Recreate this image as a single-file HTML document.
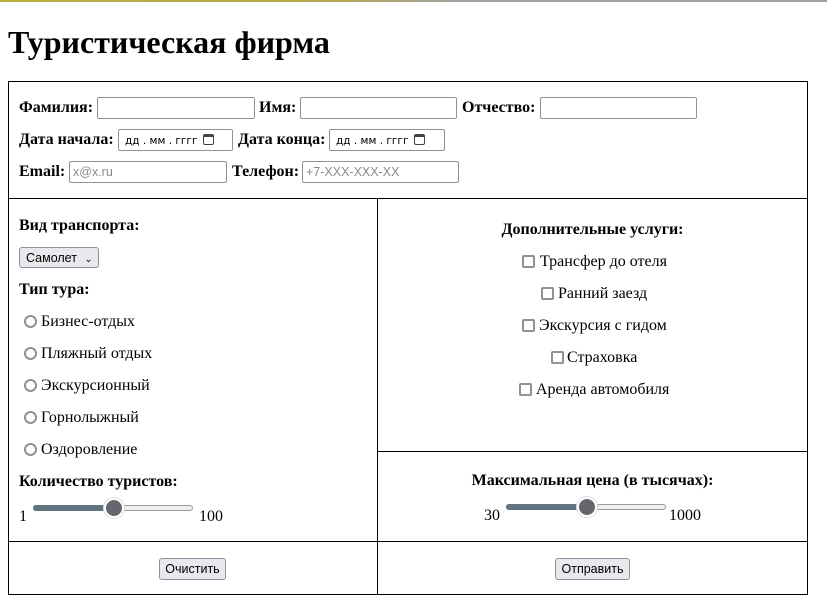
<!DOCTYPE html>
<html><head><meta charset="utf-8">
<style>
*{box-sizing:border-box;margin:0;padding:0}
body{width:827px;height:610px;background:#fff;position:relative;overflow:hidden;font-family:"Liberation Serif","Noto Serif CJK SC",serif;font-size:16px;color:#000}
.a{position:absolute;white-space:nowrap;line-height:18px}
.b{font-weight:bold}
.in{position:absolute;border:1px solid #8f8f9d;border-radius:2px;height:22px;background:#fff;font-family:"Liberation Sans",sans-serif;font-size:12.5px;color:#8a8a8a;padding:3px 3px;white-space:nowrap;line-height:15px}
.line{position:absolute;background:#000}
.rad{position:absolute;width:13px;height:13px;border:2px solid #8f8f9d;border-radius:50%}
.chk{position:absolute;width:13px;height:13px;border:2px solid #8f8f9d;border-radius:2px}
.btn{position:absolute;border:1px solid #8f8f9d;border-radius:3px;background:#e9e9ed;font-family:"Liberation Sans",sans-serif;font-size:12.5px;height:22px;text-align:center;line-height:20px}
.trk{position:absolute;height:6px;border-radius:3px;border:1px solid #9a9a9a;background:#efeff2}
.fill{position:absolute;height:6px;border-radius:3px;background:#5f7580}
.th{position:absolute;width:20px;height:20px;border-radius:50%;background:#66666e;border:2px solid #fff;box-shadow:0 0 0 1px #ddd}
.cal{display:inline-block;width:11px;height:11px;border:1.5px solid #444;border-top-width:3px;border-radius:2px;vertical-align:-1px;margin-left:2px}
</style></head><body>
<div class="a" style="left:0;top:0;width:827px;height:2px;background:linear-gradient(90deg,#b8b040 0%,#b8a850 40%,#a0a0a0 55%,#a0a0a0 100%)"></div>
<div class="a b" style="left:8px;top:22px;font-size:32px;line-height:40px">Туристическая фирма</div>

<div class="line" style="left:8px;top:81px;width:800px;height:1px"></div>
<div class="line" style="left:8px;top:594px;width:800px;height:1px"></div>
<div class="line" style="left:8px;top:81px;width:1px;height:514px"></div>
<div class="line" style="left:807px;top:81px;width:1px;height:514px"></div>
<div class="line" style="left:8px;top:198px;width:800px;height:1px"></div>
<div class="line" style="left:8px;top:541px;width:800px;height:1px"></div>
<div class="line" style="left:377px;top:198px;width:1px;height:397px"></div>
<div class="line" style="left:377px;top:451px;width:431px;height:1px"></div>

<div class="a b" style="left:19px;top:99px">Фамилия:</div>
<div class="in" style="left:97px;top:97px;width:158px"></div>
<div class="a b" style="left:259px;top:99px">Имя:</div>
<div class="in" style="left:300px;top:97px;width:157px"></div>
<div class="a b" style="left:462px;top:99px">Отчество:</div>
<div class="in" style="left:540px;top:97px;width:157px"></div>

<div class="a b" style="left:19px;top:131px">Дата начала:</div>
<div class="in" style="left:118px;top:129px;width:115px;color:#000;font-family:'DejaVu Sans','Liberation Sans',sans-serif;font-size:10.5px;padding-top:4px;padding-left:6px">дд . мм . гггг <span class="cal"></span></div>
<div class="a b" style="left:238px;top:131px">Дата конца:</div>
<div class="in" style="left:329px;top:129px;width:116px;color:#000;font-family:'DejaVu Sans','Liberation Sans',sans-serif;font-size:10.5px;padding-top:4px;padding-left:6px">дд . мм . гггг <span class="cal"></span></div>

<div class="a b" style="left:19px;top:163px">Email:</div>
<div class="in" style="left:69px;top:161px;width:158px">x@x.ru</div>
<div class="a b" style="left:232px;top:163px">Телефон:</div>
<div class="in" style="left:302px;top:161px;width:157px">+7-XXX-XXX-XX</div>

<div class="a b" style="left:19px;top:217px">Вид транспорта:</div>
<div class="btn" style="left:19px;top:247px;width:80px;height:21px;text-align:left;padding-left:6px;color:#000">Самолет <span style="font-size:10px;margin-left:4px">&#8964;</span></div>
<div class="a b" style="left:19px;top:281px">Тип тура:</div>
<div class="rad" style="left:24px;top:315px"></div><div class="a" style="left:41px;top:313px">Бизнес-отдых</div>
<div class="rad" style="left:24px;top:347px"></div><div class="a" style="left:41px;top:345px">Пляжный отдых</div>
<div class="rad" style="left:24px;top:379px"></div><div class="a" style="left:41px;top:377px">Экскурсионный</div>
<div class="rad" style="left:24px;top:411px"></div><div class="a" style="left:41px;top:409px">Горнолыжный</div>
<div class="rad" style="left:24px;top:443px"></div><div class="a" style="left:41px;top:441px">Оздоровление</div>
<div class="a b" style="left:19px;top:473px">Количество туристов:</div>
<div class="a" style="left:19px;top:508px">1</div>
<div class="trk" style="left:33px;top:505px;width:160px"></div>
<div class="fill" style="left:33px;top:505px;width:82px"></div>
<div class="th" style="left:104px;top:498px"></div>
<div class="a" style="left:199px;top:508px">100</div>

<div class="a b" style="left:378px;width:429px;text-align:center;top:221px">Дополнительные услуги:</div>
<div class="chk" style="left:522px;top:255px"></div><div class="a" style="left:540px;top:253px">Трансфер до отеля</div>
<div class="chk" style="left:541px;top:287px"></div><div class="a" style="left:558px;top:285px">Ранний заезд</div>
<div class="chk" style="left:522px;top:319px"></div><div class="a" style="left:539px;top:317px">Экскурсия с гидом</div>
<div class="chk" style="left:551px;top:351px"></div><div class="a" style="left:567px;top:349px">Страховка</div>
<div class="chk" style="left:519px;top:383px"></div><div class="a" style="left:536px;top:381px">Аренда автомобиля</div>

<div class="a b" style="left:378px;width:429px;text-align:center;top:472px">Максимальная цена (в тысячах):</div>
<div class="a" style="left:484px;top:507px">30</div>
<div class="trk" style="left:506px;top:504px;width:160px"></div>
<div class="fill" style="left:506px;top:504px;width:82px"></div>
<div class="th" style="left:577px;top:497px"></div>
<div class="a" style="left:669px;top:507px">1000</div>

<div class="btn" style="left:159px;top:558px;width:67px">Очистить</div>
<div class="btn" style="left:555px;top:558px;width:75px">Отправить</div>
</body></html>
